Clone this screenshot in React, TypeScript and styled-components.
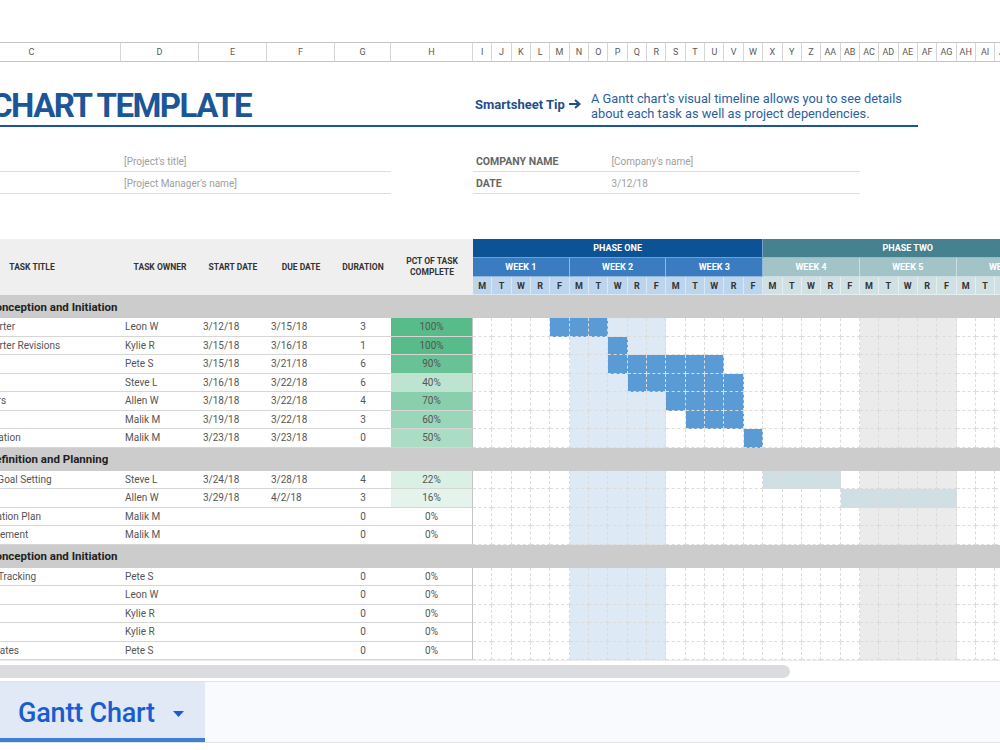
import React, { useLayoutEffect, useRef } from 'react'
import styled, { createGlobalStyle } from 'styled-components'

// sheet geometry: columns A..H, then one column per working day
const DAY_W = 19.35
const DAYS = 30
const LEAD = [12, 60, 178, 78, 68, 68, 56, 82]
const COLS = `${LEAD.map((w) => w + 'px').join(' ')} repeat(${DAYS}, ${DAY_W}px)`
// the sheet is scrolled past columns A-B and part of C
const SCROLL_X = 129

const LETTERS = Array.from({ length: LEAD.length + DAYS }, (_, i) =>
  i < 26 ? String.fromCharCode(65 + i) : 'A' + String.fromCharCode(65 + i - 26)
)

const DAY_NAMES = ['M', 'T', 'W', 'R', 'F']

type Task = {
  title: string
  owner: string
  start?: string
  due?: string
  duration: number
  pct: number
  bar?: [number, number]
  phase?: 1 | 2
}

type Section = { name: string; tasks: Task[] }

const sections: Section[] = [
  {
    name: 'Project Conception and Initiation',
    tasks: [
      { title: 'Project Charter', owner: 'Leon W', start: '3/12/18', due: '3/15/18', duration: 3, pct: 100, bar: [4, 6], phase: 1 },
      { title: 'Project Charter Revisions', owner: 'Kylie R', start: '3/15/18', due: '3/16/18', duration: 1, pct: 100, bar: [7, 7], phase: 1 },
      { title: 'Research', owner: 'Pete S', start: '3/15/18', due: '3/21/18', duration: 6, pct: 90, bar: [7, 12], phase: 1 },
      { title: 'Projections', owner: 'Steve L', start: '3/16/18', due: '3/22/18', duration: 6, pct: 40, bar: [8, 13], phase: 1 },
      { title: 'Stakeholders', owner: 'Allen W', start: '3/18/18', due: '3/22/18', duration: 4, pct: 70, bar: [10, 13], phase: 1 },
      { title: 'Guidelines', owner: 'Malik M', start: '3/19/18', due: '3/22/18', duration: 3, pct: 60, bar: [11, 13], phase: 1 },
      { title: 'Project Initiation', owner: 'Malik M', start: '3/23/18', due: '3/23/18', duration: 0, pct: 50, bar: [14, 14], phase: 1 },
    ],
  },
  {
    name: 'Project Definition and Planning',
    tasks: [
      { title: 'Scope and Goal Setting', owner: 'Steve L', start: '3/24/18', due: '3/28/18', duration: 4, pct: 22, bar: [15, 18], phase: 2 },
      { title: 'Budget', owner: 'Allen W', start: '3/29/18', due: '4/2/18', duration: 3, pct: 16, bar: [19, 24], phase: 2 },
      { title: 'Communication Plan', owner: 'Malik M', duration: 0, pct: 0 },
      { title: 'Risk Management', owner: 'Malik M', duration: 0, pct: 0 },
    ],
  },
  {
    name: 'Project Conception and Initiation',
    tasks: [
      { title: 'Status and Tracking', owner: 'Pete S', duration: 0, pct: 0 },
      { title: 'KPIs', owner: 'Leon W', duration: 0, pct: 0 },
      { title: 'Monitoring', owner: 'Kylie R', duration: 0, pct: 0 },
      { title: 'Forecasts', owner: 'Kylie R', duration: 0, pct: 0 },
      { title: 'Project Updates', owner: 'Pete S', duration: 0, pct: 0 },
    ],
  },
]

// white -> green colour scale, like the sheet's conditional format
const pctColor = (pct: number) => {
  const t = pct / 100
  const mix = (a: number) => Math.round(255 * (1 - t) + a * t)
  return `rgb(${mix(87)}, ${mix(187)}, ${mix(138)})`
}

const dayShade = (d: number) => {
  if (d >= 5 && d <= 9) return '#dde9f5'
  if (d >= 20 && d <= 24) return '#ebebeb'
  return '#ffffff'
}

const barColor = (task: Task, d: number) => {
  if (!task.bar || d < task.bar[0] || d > task.bar[1]) return null
  return task.phase === 2 ? '#d0dfe3' : '#5b9bd5'
}

const GlobalStyle = createGlobalStyle`
  * { box-sizing: border-box; }
  body {
    margin: 0;
    background: #fff;
    font-family: Roboto, "Liberation Sans", Arial, sans-serif;
  }
`

const Page = styled.div`
  width: 1000px;
  height: 750px;
  display: flex;
  flex-direction: column;
  overflow: hidden;
`

const TopSpace = styled.div`
  height: 42px;
  flex: none;
`

const Viewport = styled.div`
  width: 1000px;
  overflow: hidden;
  flex: none;
`

const Sheet = styled.div`
  width: max-content;
`

const Row = styled.div<{ $h: number; $bg?: string }>`
  display: grid;
  grid-template-columns: ${COLS};
  height: ${(p) => p.$h}px;
  background: ${(p) => p.$bg || 'transparent'};
`

const LetterRow = styled(Row)`
  border-top: 1px solid #c4c4c4;
  border-bottom: 1px solid #c4c4c4;
`

const Letter = styled.div`
  display: flex;
  align-items: center;
  justify-content: center;
  border-right: 1px solid #d6d6d6;
  font-size: 9px;
  color: #595959;
`

const TitleRow = styled(Row)`
  align-items: end;
`

const Title = styled.div`
  grid-column: 2 / 9;
  white-space: nowrap;
  font-size: 33px;
  line-height: 30px;
  font-weight: 700;
  letter-spacing: -1.5px;
  color: #1b5698;
  padding: 0 0 4px 1px;
  border-bottom: 2px solid #1b5698;
`

const TipCell = styled.div<{ $col: string }>`
  grid-column: ${(p) => p.$col};
  height: 42px;
  display: flex;
  align-items: center;
  padding: 0 0 2px 2px;
  border-bottom: 2px solid #1b5698;
  white-space: nowrap;
`

const TipLabel = styled.span`
  display: flex;
  align-items: center;
  gap: 4px;
  font-size: 13px;
  font-weight: 700;
  color: #1f4f8b;
`

const TipText = styled.span`
  font-size: 12.8px;
  line-height: 15px;
  color: #2c5e9e;
  padding-top: 3px;
`

const InfoCell = styled.div<{ $col: string; $value?: boolean }>`
  grid-column: ${(p) => p.$col};
  display: flex;
  align-items: center;
  padding: 1px 3px 0;
  border-bottom: 1px solid #dedede;
  white-space: nowrap;
  font-size: ${(p) => (p.$value ? '10px' : '10.5px')};
  font-weight: ${(p) => (p.$value ? 400 : 700)};
  color: ${(p) => (p.$value ? '#9e9e9e' : '#666')};
`

const HeadCell = styled.div`
  display: flex;
  align-items: center;
  justify-content: center;
  text-align: center;
  background: #efefef;
  font-size: 8.5px;
  line-height: 11px;
  font-weight: 700;
  color: #333;
  white-space: nowrap;
`

const GanttHead = styled.div`
  grid-column: 9 / -1;
  display: grid;
  grid-template-columns: repeat(${DAYS}, ${DAY_W}px);
  grid-template-rows: 19px 19px 18px;
`

const Band = styled.div<{ $span: number; $bg: string; $fg: string }>`
  grid-column: span ${(p) => p.$span};
  display: flex;
  align-items: center;
  justify-content: center;
  background: ${(p) => p.$bg};
  color: ${(p) => p.$fg};
  border-right: 1px solid rgba(255, 255, 255, 0.45);
  border-bottom: 1px solid rgba(255, 255, 255, 0.45);
  font-size: 9px;
  font-weight: 700;
  white-space: nowrap;
`

const SectionTitle = styled.div`
  grid-column: 3 / 9;
  display: flex;
  align-items: center;
  padding-left: 5px;
  white-space: nowrap;
  font-size: 11.5px;
  font-weight: 700;
  color: #1f1f1f;
`

const Cell = styled.div<{ $align?: string; $bg?: string; $edge?: boolean }>`
  display: flex;
  align-items: center;
  justify-content: ${(p) => p.$align || 'flex-start'};
  padding: 0 4px;
  white-space: nowrap;
  font-size: 10px;
  color: #555;
  background: ${(p) => p.$bg || 'transparent'};
  border-bottom: 1px solid #d6d6d6;
  border-right: ${(p) => (p.$edge ? '1px solid #c4c4c4' : 'none')};
`

const TaskTitle = styled(Cell)`
  padding-left: 5px;
`

const DayCell = styled.div<{ $bg: string }>`
  background: ${(p) => p.$bg};
  border-right: 1px dashed #dcdcdc;
  border-bottom: 1px dashed #dcdcdc;
`

const ScrollTrack = styled.div`
  height: 21px;
  flex: none;
  display: flex;
  align-items: center;
  border-top: 1px solid #ececec;
`

const ScrollThumb = styled.div`
  width: 790px;
  height: 13px;
  border-radius: 0 7px 7px 0;
  background: #dadce0;
`

const TabBar = styled.div`
  height: 62px;
  flex: none;
  display: flex;
  background: #f8fafd;
  border-top: 1px solid #e1e3e6;
  border-bottom: 1px solid #e1e3e6;
`

const Tab = styled.div`
  width: 205px;
  display: flex;
  align-items: center;
  padding: 6px 0 0 18px;
  background: #e1e9f7;
  border-bottom: 4px solid #3f7fd5;
  color: #1a5cd0;
  font-size: 27px;
  font-weight: 500;
  letter-spacing: -0.2px;
`

const Caret = styled.svg`
  margin-left: 18px;
  margin-top: 1px;
`

const App = () => {
  const viewportRef = useRef<HTMLDivElement>(null)

  useLayoutEffect(() => {
    if (viewportRef.current) viewportRef.current.scrollLeft = SCROLL_X
  }, [])

  const days = Array.from({ length: DAYS }, (_, d) => d)

  return (
    <Page>
      <GlobalStyle />
      <TopSpace />
      <Viewport ref={viewportRef}>
        <Sheet>
          <LetterRow $h={20}>
            {LETTERS.map((l) => (
              <Letter key={l}>{l}</Letter>
            ))}
          </LetterRow>

          <TitleRow $h={65}>
            <Title>GANTT CHART TEMPLATE</Title>
            <TipCell $col="9 / 15">
              <TipLabel>
                Smartsheet Tip
                <svg width="12" height="10" viewBox="0 0 12 10">
                  <path d="M0 5 H9" stroke="#1f4f8b" strokeWidth="2" />
                  <path d="M6 1 L10.5 5 L6 9" fill="none" stroke="#1f4f8b" strokeWidth="2" />
                </svg>
              </TipLabel>
            </TipCell>
            <TipCell $col="15 / 32">
              <TipText>
                A Gantt chart's visual timeline allows you to see details
                <br />
                about each task as well as project dependencies.
              </TipText>
            </TipCell>
          </TitleRow>

          <Row $h={23} />

          <Row $h={22}>
            <InfoCell $col="2 / 4">PROJECT TITLE</InfoCell>
            <InfoCell $col="4 / 8" $value>[Project's title]</InfoCell>
            <InfoCell $col="9 / 16">COMPANY NAME</InfoCell>
            <InfoCell $col="16 / 29" $value>[Company's name]</InfoCell>
          </Row>
          <Row $h={22}>
            <InfoCell $col="2 / 4">PROJECT MANAGER</InfoCell>
            <InfoCell $col="4 / 8" $value>[Project Manager's name]</InfoCell>
            <InfoCell $col="9 / 16">DATE</InfoCell>
            <InfoCell $col="16 / 29" $value>3/12/18</InfoCell>
          </Row>

          <Row $h={45} />

          <Row $h={56}>
            <div />
            <div />
            <HeadCell>TASK TITLE</HeadCell>
            <HeadCell>TASK OWNER</HeadCell>
            <HeadCell>START DATE</HeadCell>
            <HeadCell>DUE DATE</HeadCell>
            <HeadCell>DURATION</HeadCell>
            <HeadCell>
              PCT OF TASK
              <br />
              COMPLETE
            </HeadCell>
            <GanttHead>
              <Band $span={15} $bg="#0b5394" $fg="#fff">PHASE ONE</Band>
              <Band $span={15} $bg="#45818e" $fg="#fff">PHASE TWO</Band>
              {[1, 2, 3, 4, 5, 6].map((w) => (
                <Band key={w} $span={5} $bg={w <= 3 ? '#3a7cbf' : '#a2c4c9'} $fg="#fff">
                  WEEK {w}
                </Band>
              ))}
              {days.map((d) => (
                <Band key={d} $span={1} $bg={d < 15 ? '#bcd5ed' : '#d0e0e3'} $fg="#333">
                  {DAY_NAMES[d % 5]}
                </Band>
              ))}
            </GanttHead>
          </Row>

          {sections.map((section, si) => (
            <React.Fragment key={si}>
              <Row $h={23} $bg="#cccccc">
                <SectionTitle>{section.name}</SectionTitle>
              </Row>
              {section.tasks.map((task, ti) => (
                <Row $h={18.5} key={ti}>
                  <div />
                  <div />
                  <TaskTitle>{task.title}</TaskTitle>
                  <Cell>{task.owner}</Cell>
                  <Cell>{task.start}</Cell>
                  <Cell>{task.due}</Cell>
                  <Cell $align="center">{task.duration}</Cell>
                  <Cell $align="center" $bg={pctColor(task.pct)} $edge>
                    {task.pct}%
                  </Cell>
                  {days.map((d) => (
                    <DayCell key={d} $bg={barColor(task, d) || dayShade(d)} />
                  ))}
                </Row>
              ))}
            </React.Fragment>
          ))}
        </Sheet>
      </Viewport>

      <ScrollTrack>
        <ScrollThumb />
      </ScrollTrack>

      <TabBar>
        <Tab>
          Gantt Chart
          <Caret width="11" height="6" viewBox="0 0 11 6">
            <path d="M0 0 L11 0 L5.5 6 Z" fill="#1a5cd0" />
          </Caret>
        </Tab>
      </TabBar>
    </Page>
  )
}

export default App
